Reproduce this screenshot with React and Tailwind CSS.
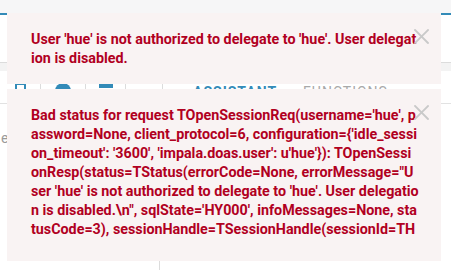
import React from "react";

const firstLines = [
  "User 'hue' is not authorized to delegate to 'hue'. User delegat",
  "ion is disabled.",
];

const secondLines = [
  "Bad status for request TOpenSessionReq(username='hue', p",
  "assword=None, client_protocol=6, configuration={'idle_sessi",
  "on_timeout': '3600', 'impala.doas.user': u'hue'}): TOpenSessi",
  "onResp(status=TStatus(errorCode=None, errorMessage=\"U",
  "ser 'hue' is not authorized to delegate to 'hue'. User delegatio",
  "n is disabled.\\n\", sqlState='HY000', infoMessages=None, sta",
  "tusCode=3), sessionHandle=TSessionHandle(sessionId=TH",
];

const CloseIcon = () => (
  <svg width="15" height="15" viewBox="0 0 15 15" className="shrink-0">
    <path d="M1 1 L14 14 M14 1 L1 14" stroke="#c9c9c9" strokeWidth="1.8" strokeLinecap="square" />
  </svg>
);

const Toast = ({ lines, className }) => (
  <div className={`absolute left-[7px] w-[434px] bg-[#f9f3f3] ${className}`}>
    <div className="relative pl-[24px] pt-[17px]">
      <div className="text-[14.3px] leading-[19px] font-bold text-[#b1001f] whitespace-pre">
        {lines.map((l, i) => (
          <div key={i}>{l}</div>
        ))}
      </div>
      <div className="absolute left-[407px] top-[16px]">
        <CloseIcon />
      </div>
    </div>
  </div>
);

export default function App() {
  return (
    <div
      className="relative w-[451px] h-[270px] overflow-hidden bg-white"
      style={{ fontFamily: "Roboto, 'Liberation Sans', sans-serif" }}
    >
      {/* page behind the toasts */}
      <div className="h-[13px] bg-[#f6f6f7]" />
      <div className="h-[2px] bg-[#338bb8]" />
      <div className="h-[47px]" />
      <div className="h-[1px] bg-[#dcdcdc]" />
      <div className="h-[8px] bg-[#f3f3f3]" />
      <div className="flex items-start h-[32px] pt-[12px]">
        <div className="w-[40px] flex justify-center">
          <div className="w-[11px] h-[11px] border-2 border-[#338bb8]" />
        </div>
        <div className="w-px h-[14px] bg-[#dcdcdc]" />
        <div className="w-[44px] flex justify-center">
          <div className="w-[16px] h-[8px] rounded-t-full bg-[#338bb8]" />
        </div>
        <div className="w-px h-[14px] bg-[#dcdcdc]" />
        <div className="w-[39px] flex justify-center">
          <div className="w-[14px] h-[5px] bg-[#338bb8]" />
        </div>
        <div className="w-px h-[14px] bg-[#dcdcdc]" />
        <div className="w-[36px]" />
        <div className="w-px h-[20px] bg-[#dcdcdc]" />
        <div className="pl-[30px] text-[14px] font-bold tracking-[1px] text-[#338bb8] uppercase -mt-[1px]">Assistant</div>
        <div className="pl-[26px] text-[14px] tracking-[1px] text-[#a9a9a9] uppercase -mt-[1px]">Functions</div>
      </div>
      <div className="h-[1px] bg-[#e2e2e2]" />
      <div className="flex h-[166px]">
        <div className="w-[160px] border-r border-[#dcdcdc] pt-[24px] pl-[1px] text-[14px] text-[#9a9a9a]">ex</div>
      </div>

      <Toast lines={firstLines} className="top-[13px] h-[71px]" />
      <Toast lines={secondLines} className="top-[89px] h-[172px]" />
    </div>
  );
}
